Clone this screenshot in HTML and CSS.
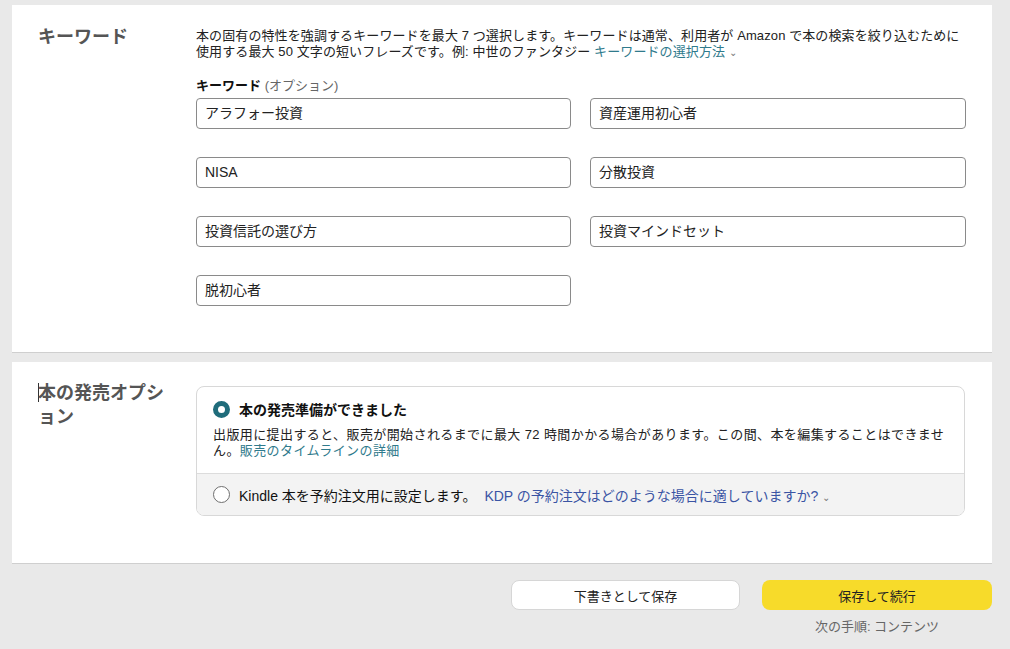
FILE: index.html
```html
<!DOCTYPE html>
<html lang="ja">
<head>
<meta charset="utf-8">
<link rel="stylesheet" href="styles.css">
</head>
<body>
<div class="page">
  <section class="panel panel-keywords">
    <h2 class="sec-title">キーワード</h2>
    <div class="sec-body">
      <p class="desc">本の固有の特性を強調するキーワードを最大 7 つ選択します。キーワードは通常、利用者が Amazon で本の検索を絞り込むために<br>使用する最大 50 文字の短いフレーズです。例: 中世のファンタジー <a class="link">キーワードの選択方法 <span class="chev">⌄</span></a></p>
      <div class="label"><b>キーワード</b> <span class="opt">(オプション)</span></div>
      <div class="grid">
        <div class="input">アラフォー投資</div>
        <div class="input">資産運用初心者</div>
        <div class="input">NISA</div>
        <div class="input">分散投資</div>
        <div class="input">投資信託の選び方</div>
        <div class="input">投資マインドセット</div>
        <div class="input">脱初心者</div>
      </div>
    </div>
  </section>
  <section class="panel panel-release">
    <h2 class="sec-title narrow"><span class="caret"></span>本の発売オプション</h2>
    <div class="sec-body">
      <div class="optbox">
        <div class="opt-top">
          <div class="opt-row"><span class="radio on"></span><b class="opt-title">本の発売準備ができました</b></div>
          <p class="opt-desc">出版用に提出すると、販売が開始されるまでに最大 72 時間かかる場合があります。この間、本を編集することはできません。<a class="link">販売のタイムラインの詳細</a></p>
        </div>
        <div class="opt-bottom">
          <span class="radio"></span><span class="opt-text">Kindle 本を予約注文用に設定します。</span><a class="link blue">KDP の予約注文はどのような場合に適していますか? <span class="chev">⌄</span></a>
        </div>
      </div>
    </div>
  </section>
  <div class="actions">
    <button class="btn draft">下書きとして保存</button>
    <div class="next">
      <button class="btn primary">保存して続行</button>
      <div class="next-note">次の手順: コンテンツ</div>
    </div>
  </div>
</div>
</body>
</html>
```
FILE: styles.css
```css
* { box-sizing: border-box; }
html, body { margin: 0; padding: 0; }
body {
  background: #e9e9e9;
  font-family: "Liberation Sans", "Noto Sans CJK JP", sans-serif;
  color: #111;
  width: 1010px;
  height: 649px;
  overflow: hidden;
}
.page { padding: 5px 18px 0 12px; }
.panel {
  background: #fff;
  border-bottom: 1px solid #cfcfcf;
  display: flex;
  padding: 0 26px;
}
.panel-keywords { height: 348px; padding-top: 23px; }
.panel-release { height: 202px; margin-top: 9px; padding-top: 24px; }
.sec-title {
  margin: 0;
  width: 158px;
  flex: none;
  font-size: 18px;
  line-height: 20px;
  font-weight: bold;
  color: #555;
}
.panel-keywords .sec-title { margin-top: -1px; }
.panel-release .sec-title { padding-right: 30px; line-height: 24px; margin-top: -5px; }
.caret {
  display: inline-block;
  width: 1px;
  height: 19px;
  background: #333;
  vertical-align: -3px;
  margin-right: -1px;
}
.sec-body { flex: 1; }
.desc {
  margin: 0;
  font-size: 13px;
  line-height: 16px;
  color: #222;
  letter-spacing: 0.1px;
  white-space: nowrap;
}
.link { color: #2f7a8c; }
.link.blue { color: #3a54a4; }
.chev { font-size: 10px; color: #777; }
.label { margin-top: 17px; font-size: 13px; line-height: 16px; color: #111; }
.label .opt { color: #666; font-weight: normal; }
.grid {
  margin-top: 4px;
  display: grid;
  grid-template-columns: 375px 376px;
  column-gap: 19px;
  row-gap: 28px;
}
.input {
  height: 31px;
  border: 1px solid #8a8a8a;
  border-radius: 4px;
  padding: 0 8px;
  font-size: 14px;
  line-height: 29px;
  color: #222;
}
.optbox {
  width: 769px;
  border: 1px solid #d8d8d8;
  border-radius: 8px;
  overflow: hidden;
}
.opt-top { padding: 12px 16px 14px 16px; border-bottom: 1px solid #dcdcdc; }
.opt-row { display: flex; align-items: center; height: 20px; }
.radio {
  display: inline-block;
  width: 17px;
  height: 17px;
  border-radius: 50%;
  border: 1px solid #6f6f6f;
  background: #fff;
  flex: none;
  margin-right: 9px;
}
.radio.on { border: 5px solid #1f6c7b; }
.opt-title { font-size: 14px; color: #111; }
.opt-desc { margin: 8px 0 0 0; font-size: 13px; line-height: 16px; color: #222; letter-spacing: 0.4px; }
.opt-bottom {
  background: #f3f3f3;
  height: 41px;
  display: flex;
  align-items: center;
  padding: 0 16px;
  font-size: 14px;
}
.opt-bottom .radio { margin-right: 9px; }
.opt-text { color: #111; margin-right: 8px; }
.actions {
  display: flex;
  justify-content: flex-end;
  gap: 22px;
  margin-top: 16px;
}
.btn {
  font-family: inherit;
  height: 30px;
  border-radius: 8px;
  border: none;
  font-size: 13px;
  color: #222;
}
.btn.draft { width: 229px; background: #fff; border: 1px solid #d6d6d6; }
.next { width: 230px; text-align: center; }
.btn.primary { width: 230px; background: #f7db2a; }
.next-note { font-size: 13px; color: #666; margin-top: 6px; }
```
